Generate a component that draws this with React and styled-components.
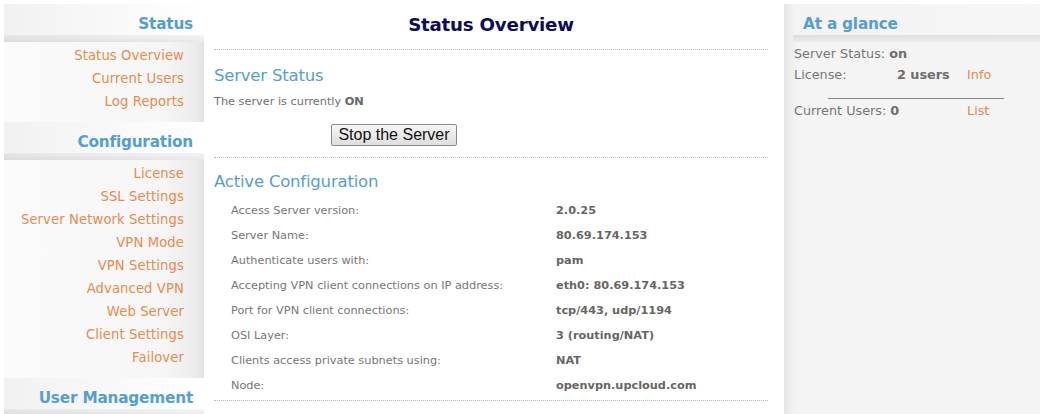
import React from "react";
import styled, { createGlobalStyle } from "styled-components";

const Global = createGlobalStyle`
  html, body { margin: 0; padding: 0; background: #fff; }
  body { font-family: "DejaVu Sans", Verdana, sans-serif; }
`;

const Page = styled.div`
  display: flex;
  align-items: stretch;
  height: 414px;
  padding: 4px 8px 0 4px;
  box-sizing: border-box;
  overflow: hidden;
`;

const LeftBar = styled.nav`
  width: 200px;
  flex: none;
  background: linear-gradient(to right, #fbfbfb 0%, #f6f6f6 80%, #ebebeb 96%, #e2e2e2 100%);
  display: flex;
  flex-direction: column;
`;

const SideHead = styled.h2`
  margin: 0;
  height: 38px;
  line-height: 36px;
  box-sizing: border-box;
  padding: 2px ${p => (p.$right ? "11px" : "0")} 0 ${p => (p.$right ? "0" : "19px")};
  text-align: ${p => (p.$right ? "right" : "left")};
  font-family: "DejaVu Sans", sans-serif;
  font-weight: bold;
  font-size: 15.3px;
  letter-spacing: -0.2px;
  color: #559fd0;
  background:
    linear-gradient(to bottom, rgba(0,0,0,0) 0, rgba(0,0,0,0) 31px, rgba(0,0,0,0.04) 31px, rgba(0,0,0,0.09) 38px),
    linear-gradient(to ${p => (p.$right ? "right" : "left")}, #f1f1f1, #ffffff);
`;

const NavList = styled.ul`
  list-style: none;
  margin: 0;
  padding: 2px 20px 9px 0;
  display: flex;
  flex-direction: column;
  align-items: flex-end;
`;

const NavLink = styled.li`
  font-size: 13.2px;
  line-height: 23px;
  height: 23px;
  color: #ea8a4c;
  letter-spacing: 0.1px;
`;

const Main = styled.main`
  width: 580px;
  flex: none;
  background: #fff;
  padding: 0 16px 0 10px;
  box-sizing: border-box;
`;

const Title = styled.h1`
  margin: 0;
  padding-top: 10px;
  height: 46px;
  box-sizing: border-box;
  text-align: center;
  font-size: 18.2px;
  font-weight: bold;
  color: #0a0a60;
  letter-spacing: -0.2px;
  border-bottom: 1px dotted #bbb;
`;

const SectionTitle = styled.h3`
  margin: 0;
  padding: ${p => p.$pad};
  font-size: 16.5px;
  font-weight: normal;
  letter-spacing: -0.2px;
  color: #559fd0;
`;

const Para = styled.p`
  margin: 10px 0 0;
  font-size: 11.3px;
  color: #707070;
  b { color: #666; }
`;

const ButtonRow = styled.div`
  display: flex;
  justify-content: flex-start;
  padding: 16px 0 11px 117px;
  border-bottom: 1px dotted #bbb;
`;

const Button = styled.button`
  font-family: "Liberation Sans", Arial, sans-serif;
  font-size: 16px;
  color: #111;
  background: linear-gradient(#f6f6f6, #dedede);
  border: 1px solid #8a8a8a;
  border-radius: 2px;
  height: 22px;
  width: 126px;
  padding: 0;
`;

const ConfigTable = styled.div`
  display: grid;
  grid-template-columns: 325px 1fr;
  padding: 7px 0 2px 17px;
  border-bottom: 1px dotted #bbb;
`;

const Cell = styled.div`
  font-size: 11.3px;
  line-height: 25px;
  height: 25px;
  color: ${p => (p.$value ? "#666" : "#777")};
  font-weight: ${p => (p.$value ? "bold" : "normal")};
`;

const RightBar = styled.aside`
  flex: 1;
  background: linear-gradient(to right, #e3e3e3 0, #eeeeee 6px, #f4f4f4 14px, #f4f4f4 100%);
  display: flex;
  flex-direction: column;
`;

const RightHead = styled(SideHead)`
  margin-left: 9px;
  padding-left: 10px;
  background:
    linear-gradient(to bottom, rgba(0,0,0,0) 0, rgba(0,0,0,0) 31px, rgba(0,0,0,0.09) 31px, rgba(0,0,0,0.03) 38px),
    linear-gradient(to right, #f3f3f3, #f6f6f6);
`;

const Glance = styled.div`
  padding: 1px 0 0 10px;
  display: grid;
  grid-template-columns: 103px 70px auto;
  font-size: 12.8px;
  color: #777;
`;

const GRow = styled.div`
  display: contents;
`;

const GCell = styled.span`
  line-height: 21px;
  color: ${p => (p.$link ? "#ea8a4c" : p.$bold ? "#6e6e6e" : "#777")};
  font-weight: ${p => (p.$bold ? "bold" : "normal")};
  white-space: nowrap;
`;

const Rule = styled.hr`
  grid-column: 1 / -1;
  margin: 13px 0 1px 34px;
  border: 0;
  border-top: 1px solid #888;
  width: 176px;
`;

const navStatus = ["Status Overview", "Current Users", "Log Reports"];
const navConfig = [
  "License",
  "SSL Settings",
  "Server Network Settings",
  "VPN Mode",
  "VPN Settings",
  "Advanced VPN",
  "Web Server",
  "Client Settings",
  "Failover",
];

const config = [
  ["Access Server version:", "2.0.25"],
  ["Server Name:", "80.69.174.153"],
  ["Authenticate users with:", "pam"],
  ["Accepting VPN client connections on IP address:", "eth0: 80.69.174.153"],
  ["Port for VPN client connections:", "tcp/443, udp/1194"],
  ["OSI Layer:", "3 (routing/NAT)"],
  ["Clients access private subnets using:", "NAT"],
  ["Node:", "openvpn.upcloud.com"],
];

export default function App() {
  return (
    <>
      <Global />
      <Page>
        <LeftBar>
          <SideHead $right>Status</SideHead>
          <NavList>
            {navStatus.map(n => (
              <NavLink key={n}>{n}</NavLink>
            ))}
          </NavList>
          <SideHead $right>Configuration</SideHead>
          <NavList>
            {navConfig.map(n => (
              <NavLink key={n}>{n}</NavLink>
            ))}
          </NavList>
          <SideHead $right>User Management</SideHead>
        </LeftBar>
        <Main>
          <Title>Status Overview</Title>
          <SectionTitle $pad="16px 0 0">Server Status</SectionTitle>
          <Para>
            The server is currently <b>ON</b>
          </Para>
          <ButtonRow>
            <Button>Stop the Server</Button>
          </ButtonRow>
          <SectionTitle $pad="14px 0 0">Active Configuration</SectionTitle>
          <ConfigTable>
            {config.map(([k, v]) => (
              <React.Fragment key={k}>
                <Cell>{k}</Cell>
                <Cell $value>{v}</Cell>
              </React.Fragment>
            ))}
          </ConfigTable>
        </Main>
        <RightBar>
          <RightHead>At a glance</RightHead>
          <Glance>
            <GRow>
              <GCell style={{ gridColumn: "1 / -1" }}>
                Server Status: <GCell $bold>on</GCell>
              </GCell>
            </GRow>
            <GRow>
              <GCell>License:</GCell>
              <GCell $bold>2 users</GCell>
              <GCell $link>Info</GCell>
            </GRow>
            <Rule />
            <GRow>
              <GCell>
                Current Users: <GCell $bold>0</GCell>
              </GCell>
              <GCell />
              <GCell $link>List</GCell>
            </GRow>
          </Glance>
        </RightBar>
      </Page>
    </>
  );
}
